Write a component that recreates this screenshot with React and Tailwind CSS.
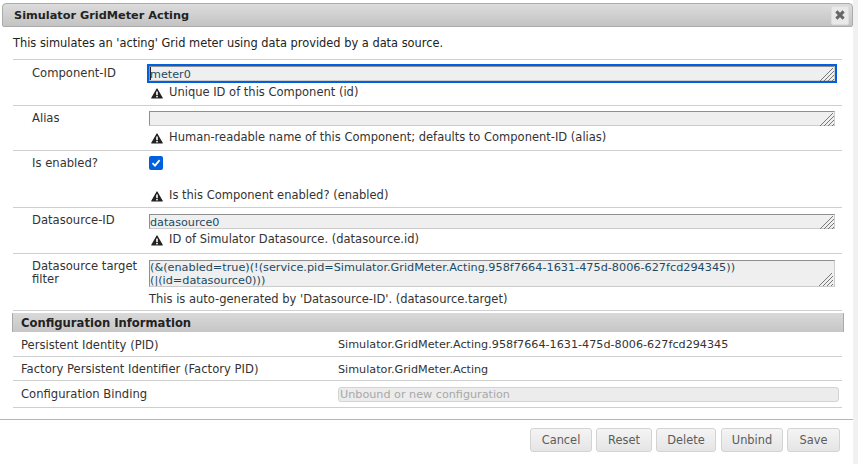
import React from "react";

const font = "font-['DejaVu_Sans',Verdana,sans-serif]";

function Grip() {
  return (
    <svg className="absolute right-0 bottom-0" width="16" height="14" viewBox="0 0 16 14" fill="none" stroke="#777" strokeWidth="1">
      <path d="M1 14 L14 1" />
      <path d="M5 14 L15 4" />
      <path d="M9 14 L15 8" />
      <path d="M13 14 L15 12" />
    </svg>
  );
}

function Warn() {
  return (
    <svg className="shrink-0" width="12" height="11" viewBox="0 0 12 11">
      <path d="M6 1 L11.2 10 L0.8 10 Z" fill="#222" stroke="#222" strokeWidth="1.2" strokeLinejoin="round" />
      <rect x="5.2" y="3.5" width="1.6" height="3.6" fill="#fff" />
      <rect x="5.2" y="7.9" width="1.6" height="1.5" fill="#fff" />
    </svg>
  );
}

function Hint({ children }) {
  return (
    <div className="flex items-center gap-[6px] pl-[2px] h-[16px] text-[11.5px] text-[#333]">
      <Warn />
      <span>{children}</span>
    </div>
  );
}

function Input({ value, focus }) {
  return (
    <div className={focus ? "relative mt-[-2px] ml-[-2px] mr-[-2px] mb-[2px] border-2 border-[#0060df]" : "relative"}>
      <div className="relative h-[15px] bg-[#efefef] border-t border-l border-t-[#8f8f8f] border-l-[#8f8f8f] border-r border-b border-r-[#ccc] border-b-[#ccc] text-[11.2px] leading-[15px] text-[#1d4a63] overflow-hidden">
        {focus && <span className="absolute left-0 top-0 w-px h-[13px] bg-[#222]" />}
        {value}
      </div>
      <Grip />
    </div>
  );
}

function Row({ label, height, top = "pt-[6px]", children }) {
  return (
    <div className={`flex border-b border-[#cfcfcf] ${height}`}>
      <div className="w-[136px] shrink-0 pl-[19px] pt-[6px] pr-[4px] text-[11.6px] leading-[13px] text-[#333]">{label}</div>
      <div className={`flex-1 pr-[7px] ${top}`}>{children}</div>
    </div>
  );
}

function InfoRow({ label, children, height }) {
  return (
    <div className={`flex items-center border-b border-[#cfcfcf] pl-[8px] ${height}`}>
      <div className="w-[317px] shrink-0 text-[11.6px] text-[#333]">{label}</div>
      <div className="flex-1 pr-[3px] text-[11.2px] text-[#333]">{children}</div>
    </div>
  );
}

function Btn({ children, width }) {
  return (
    <button className={`${width} h-[24px] pt-[2px] rounded-[3px] border border-[#d3d3d3] bg-gradient-to-b from-[#f4f4f4] to-[#e5e5e5] text-[11.4px] text-[#5c5c5c]`}>
      {children}
    </button>
  );
}

export default function App() {
  return (
    <div className={`flex h-[464px] w-[858px] bg-white overflow-hidden ${font}`}>
      <div className="w-[853px] pt-[3px]">
        <div className="ml-[2px] h-[24px] flex items-center justify-between rounded-t-[4px] rounded-b-[2px] border border-[#ababab] bg-gradient-to-b from-[#dcdcdc] to-[#c3c3c3] pl-[11px] pr-[3px]">
          <span className="mt-[2px] text-[11.3px] font-bold text-[#222]">Simulator GridMeter Acting</span>
          <div className="flex h-[19px] w-[18px] items-center justify-center rounded-[2px] border border-[#dedede] bg-[#e9e9e9]">
            <svg width="10" height="10" viewBox="0 0 10 10" stroke="#666" strokeWidth="3">
              <path d="M1.4 1.4 L8.6 8.6 M8.6 1.4 L1.4 8.6" />
            </svg>
          </div>
        </div>

        <p className="ml-[13px] mt-[9px] h-[23px] text-[11.4px] leading-[14px] text-[#222]">
          This simulates an 'acting' Grid meter using data provided by a data source.
        </p>

        <div className="ml-[13px] mr-[11px] border-t border-[#cfcfcf]">
          <Row label={<span className="relative top-[1px]">Component-ID</span>} height="h-[46px]">
            <Input value="meter0" focus />
            <Hint>Unique ID of this Component (id)</Hint>
          </Row>
          <Row label="Alias" height="h-[45px]" top="pt-[5px]">
            <Input value="" />
            <div className="mt-[4px]"><Hint>Human-readable name of this Component; defaults to Component-ID (alias)</Hint></div>
          </Row>
          <Row label="Is enabled?" height="h-[57px]" top="pt-[5px]">
            <div className="flex h-[14px] w-[14px] items-center justify-center rounded-[2px] bg-[#0060df]">
              <svg width="10" height="10" viewBox="0 0 10 10" fill="none" stroke="#fff" strokeWidth="1.8">
                <path d="M1.5 5.2 L4 7.6 L8.6 2.2" />
              </svg>
            </div>
            <div className="mt-[18px]"><Hint>Is this Component enabled? (enabled)</Hint></div>
          </Row>
          <Row label="Datasource-ID" height="h-[46px]">
            <Input value="datasource0" />
            <div className="mt-[3px]"><Hint>ID of Simulator Datasource. (datasource.id)</Hint></div>
          </Row>
          <Row label="Datasource target filter" height="h-[57px]">
            <div className="relative h-[27px] bg-[#efefef] border-t border-l border-t-[#8f8f8f] border-l-[#8f8f8f] border-r border-b border-r-[#ccc] border-b-[#ccc] text-[11.25px] leading-[13px] text-[#1d4a63] whitespace-pre overflow-hidden">
              {"(&(enabled=true)(!(service.pid=Simulator.GridMeter.Acting.958f7664-1631-475d-8006-627fcd294345))\n(|(id=datasource0)))"}
              <Grip />
            </div>
            <div className="mt-[5px] text-[11.5px] leading-[14px] text-[#333]">This is auto-generated by 'Datasource-ID'. (datasource.target)</div>
          </Row>
        </div>

        <div className="ml-[12px] mr-[9px] mt-[2px] h-[19px] pt-[2px] flex items-center border-l border-r border-[#a9a9a9] bg-gradient-to-b from-[#d9d9d9] to-[#c6c6c6] pl-[8px] text-[11.6px] font-bold text-[#222]">
          Configuration Information
        </div>
        <div className="ml-[13px] mr-[11px]">
          <InfoRow label="Persistent Identity (PID)" height="h-[25px] pt-[3px]">Simulator.GridMeter.Acting.958f7664-1631-475d-8006-627fcd294345</InfoRow>
          <InfoRow label="Factory Persistent Identifier (Factory PID)" height="h-[24px] pt-[3px]">Simulator.GridMeter.Acting</InfoRow>
          <InfoRow label="Configuration Binding" height="h-[27px] pt-[1px]">
            <div className="h-[15px] rounded-[3px] border border-[#d3d3d3] bg-[#ececec] pl-[1px] leading-[13px] text-[#a8a8a8]">Unbound or new configuration</div>
          </InfoRow>
        </div>

        <div className="mt-[11px] border-t border-[#b5b5b5] pt-[8px] pr-[13px] flex justify-end gap-[4px]">
          <Btn width="w-[62px]">Cancel</Btn>
          <Btn width="w-[56px]">Reset</Btn>
          <Btn width="w-[60px] mr-[1px]">Delete</Btn>
          <Btn width="w-[62px]">Unbind</Btn>
          <Btn width="w-[53px]">Save</Btn>
        </div>
      </div>
      <div className="flex-1 bg-[#f1f1f1]" />
    </div>
  );
}
